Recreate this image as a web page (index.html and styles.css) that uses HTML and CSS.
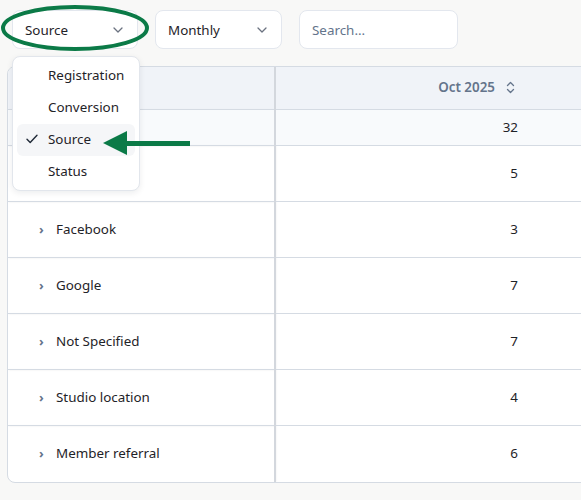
FILE: index.html
```html
<!DOCTYPE html>
<html>
<head>
<meta charset="utf-8">
<link rel="stylesheet" href="styles.css">
</head>
<body>
<div class="page">
  <div class="toolbar">
    <div class="select select-source">
      <span>Source</span>
      <svg class="chev" width="10" height="6" viewBox="0 0 10 6"><path d="M1 1l4 4 4-4" fill="none" stroke="#6b7280" stroke-width="1.3" stroke-linecap="round" stroke-linejoin="round"/></svg>
    </div>
    <div class="select select-period">
      <span>Monthly</span>
      <svg class="chev" width="10" height="6" viewBox="0 0 10 6"><path d="M1 1l4 4 4-4" fill="none" stroke="#6b7280" stroke-width="1.3" stroke-linecap="round" stroke-linejoin="round"/></svg>
    </div>
    <div class="search"><span class="placeholder">Search...</span></div>
  </div>

  <div class="table-wrap">
    <table class="grid">
      <thead>
        <tr>
          <th class="first"></th>
          <th><span class="th-inner">Oct 2025 <svg class="sort" width="9" height="13" viewBox="0 0 9 13"><path d="M1.5 4.5L4.5 1.5L7.5 4.5M1.5 8.5L4.5 11.5L7.5 8.5" fill="none" stroke="#64748b" stroke-width="1.3" stroke-linecap="round" stroke-linejoin="round"/></svg></span></th>
          <th></th>
        </tr>
      </thead>
      <tbody>
        <tr class="total">
          <td class="first"></td>
          <td>32</td>
          <td></td>
        </tr>
        <tr>
          <td class="first"></td>
          <td>5</td>
          <td></td>
        </tr>
        <tr>
          <td class="first"><span class="exp">›</span>Facebook</td>
          <td>3</td>
          <td></td>
        </tr>
        <tr>
          <td class="first"><span class="exp">›</span>Google</td>
          <td>7</td>
          <td></td>
        </tr>
        <tr>
          <td class="first"><span class="exp">›</span>Not Specified</td>
          <td>7</td>
          <td></td>
        </tr>
        <tr>
          <td class="first"><span class="exp">›</span>Studio location</td>
          <td>4</td>
          <td></td>
        </tr>
        <tr class="last">
          <td class="first"><span class="exp">›</span>Member referral</td>
          <td>6</td>
          <td></td>
        </tr>
      </tbody>
    </table>
  </div>

  <div class="menu">
    <div class="item">Registration</div>
    <div class="item">Conversion</div>
    <div class="item active">
      <svg class="check" width="12" height="10" viewBox="0 0 12 10"><path d="M1 5.2L4.2 8.4L11 1.2" fill="none" stroke="#1f2937" stroke-width="1.4" stroke-linecap="round" stroke-linejoin="round"/></svg>
      Source
    </div>
    <div class="item">Status</div>
  </div>

  <svg class="annot" width="581" height="500" viewBox="0 0 581 500">
    <ellipse cx="75" cy="28" rx="72" ry="21" fill="none" stroke="#0b7a47" stroke-width="4"/>
    <polygon points="103,143 127,131 127,155" fill="#0b7a47"/>
    <rect x="124" y="141" width="66" height="5" fill="#0b7a47"/>
  </svg>
</div>
</body>
</html>
```

FILE: styles.css
```css
html, body {
  margin: 0;
  padding: 0;
  background: #f8f8f7;
  overflow: hidden;
}

body {
  font-family: "Noto Sans", "Open Sans", sans-serif;
  font-size: 13.4px;
  color: #1f2328;
}

.page {
  position: relative;
  width: 581px;
  height: 500px;
  overflow: hidden;
}

.toolbar {
  display: flex;
  gap: 17px;
  padding: 10px 0 0 12px;
  height: 39px;
}

.select,
.search {
  box-sizing: border-box;
  height: 39px;
  background: #fff;
  border: 1px solid #e3e7ee;
  border-radius: 8px;
  display: flex;
  align-items: center;
}

.select {
  justify-content: space-between;
  padding: 0 14px 0 12px;
}

.select-source { width: 126px; }
.select-period { width: 127px; }

.chev { display: block; }

.search {
  width: 159px;
  padding: 0 12px;
}

.placeholder { color: #64748b; }

.table-wrap {
  margin: 17px 0 0 7px;
  width: 800px;
  border: 1px solid #d5dbe3;
  border-radius: 8px;
  overflow: hidden;
  background: #fff;
}

.grid {
  border-collapse: collapse;
  table-layout: fixed;
  width: 800px;
}

.grid th,
.grid td {
  padding: 0 16px 2px;
  text-align: right;
  border-bottom: 1px solid #d5dbe3;
}

.grid th:nth-child(2),
.grid td:nth-child(2) { width: 260px; box-sizing: border-box; padding-right: 17px; }

.grid th {
  height: 40px;
  background: #f0f3f8;
  color: #64748b;
  font-weight: 600;
}

.th-inner {
  display: inline-flex;
  align-items: center;
  gap: 11px;
}

.grid th:nth-child(2) { padding-right: 20px; }

.sort { display: block; }

.grid td {
  height: 53px;
  color: #1f2328;
}

.grid tr.total td {
  height: 33px;
  background: #f8fafc;
}

.grid tr.last td { border-bottom: none; height: 54px; }

.grid .first {
  width: 267px;
  box-sizing: border-box;
  text-align: left;
  padding-left: 31px;
  border-right: 2px solid #d3d7dd;
  box-shadow: 1px 0 2px rgba(0, 0, 0, 0.08);
}

.exp {
  display: inline-block;
  width: 17px;
  color: #64748b;
  font-size: 13px;
  font-weight: 700;
}

.menu {
  position: absolute;
  left: 12px;
  top: 56px;
  width: 128px;
  height: 135px;
  box-sizing: border-box;
  padding: 3px 4px;
  background: #fff;
  border: 1px solid #e2e6ec;
  border-radius: 8px;
  box-shadow: 0 2px 6px rgba(15, 23, 42, 0.08);
}

.item {
  position: relative;
  height: 32px;
  line-height: 30px;
  padding-left: 31px;
  border-radius: 6px;
  color: #1f2328;
}

.item.active { background: #f5f6f8; }

.check {
  position: absolute;
  left: 9px;
  top: 10px;
}

.annot {
  position: absolute;
  left: 0;
  top: 0;
  pointer-events: none;
}
```
